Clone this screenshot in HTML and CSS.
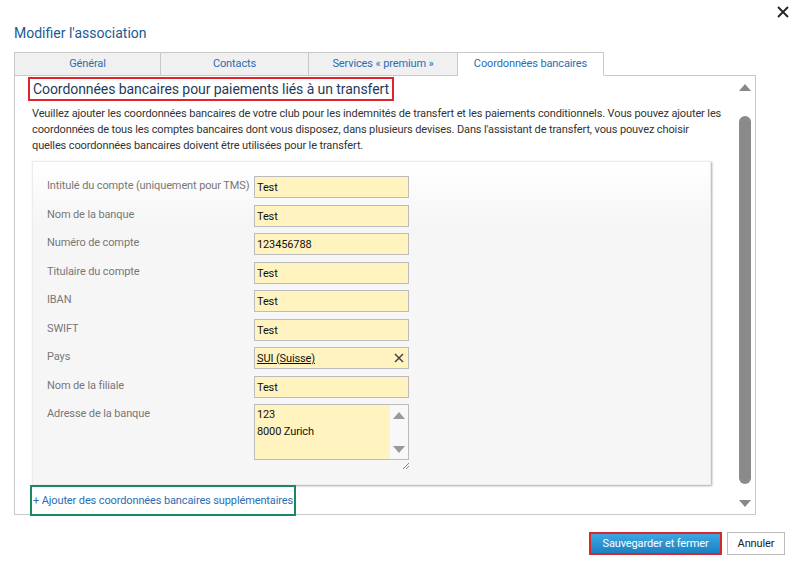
FILE: index.html
```html
<!DOCTYPE html>
<html lang="fr">
<head>
<meta charset="UTF-8">
<title>Modifier l'association</title>
<link rel="stylesheet" href="styles.css">
</head>
<body>
  <div class="dialog">
    <div class="header">
      <div class="title">Modifier l'association</div>
      <div class="close">
        <svg width="12" height="12" viewBox="0 0 12 12"><path d="M1 1L11 11M11 1L1 11" stroke="#222" stroke-width="1.8"/></svg>
      </div>
    </div>

    <div class="tabs">
      <div class="tab t1">Général</div>
      <div class="tab t2">Contacts</div>
      <div class="tab t3">Services « premium »</div>
      <div class="tab t4 active">Coordonnées bancaires</div>
    </div>

    <div class="panel">
      <div class="panel-body">
        <div class="heading">Coordonnées bancaires pour paiements liés à un transfert</div>
        <p class="intro">Veuillez ajouter les coordonnées bancaires de votre club pour les indemnités de transfert et les paiements conditionnels. Vous pouvez ajouter les coordonnées de tous les comptes bancaires dont vous disposez, dans plusieurs devises. Dans l'assistant de transfert, vous pouvez choisir quelles coordonnées bancaires doivent être utilisées pour le transfert.</p>

        <div class="card">
          <div class="row"><div class="label">Intitulé du compte (uniquement pour TMS)</div><div class="field">Test</div></div>
          <div class="row"><div class="label">Nom de la banque</div><div class="field">Test</div></div>
          <div class="row"><div class="label">Numéro de compte</div><div class="field">123456788</div></div>
          <div class="row"><div class="label">Titulaire du compte</div><div class="field">Test</div></div>
          <div class="row"><div class="label">IBAN</div><div class="field">Test</div></div>
          <div class="row"><div class="label">SWIFT</div><div class="field">Test</div></div>
          <div class="row"><div class="label">Pays</div>
            <div class="field select"><span class="country">SUI (Suisse)</span>
              <svg width="10" height="10" viewBox="0 0 10 10"><path d="M1 1L9 9M9 1L1 9" stroke="#444" stroke-width="1.5"/></svg>
            </div>
          </div>
          <div class="row"><div class="label">Nom de la filiale</div><div class="field">Test</div></div>
          <div class="row"><div class="label">Adresse de la banque</div>
            <div class="area-wrap">
              <div class="field area">
                <div class="area-text">123<br>8000 Zurich</div>
                <div class="area-scroll">
                  <svg width="12" height="8" viewBox="0 0 12 8"><path d="M0 8L6 1L12 8Z" fill="#999"/></svg>
                  <svg width="12" height="8" viewBox="0 0 12 8"><path d="M0 0L6 7L12 0Z" fill="#999"/></svg>
                </div>
              </div>
              <svg class="grip" width="6" height="6" viewBox="0 0 6 6"><path d="M6 0L0 6M6 3L3 6" stroke="#888" stroke-width="1"/></svg>
            </div>
          </div>
        </div>

        <div class="add-link">+ Ajouter des coordonnées bancaires supplémentaires</div>
      </div>

      <div class="scrollbar">
        <svg width="12" height="8" viewBox="0 0 12 8"><path d="M0 8L6 1L12 8Z" fill="#888"/></svg>
        <div class="thumb"></div>
        <svg width="12" height="8" viewBox="0 0 12 8"><path d="M0 0L6 7L12 0Z" fill="#888"/></svg>
      </div>
    </div>

    <div class="footer">
      <button class="btn primary">Sauvegarder et fermer</button>
      <button class="btn cancel">Annuler</button>
    </div>
  </div>
</body>
</html>
```

FILE: styles.css
```css
body {
  margin: 0;
  background: #fff;
  font-family: Roboto, "Liberation Sans", sans-serif;
  font-size: 11px;
  letter-spacing: -0.12px;
  color: #333;
}

.dialog {
  width: 798px;
  height: 571px;
  padding: 0 14px;
  box-sizing: border-box;
}

.header {
  display: flex;
  justify-content: space-between;
  align-items: flex-start;
  height: 52px;
}

.title {
  margin-top: 24px;
  font-size: 14px;
  letter-spacing: 0;
  line-height: 18px;
  color: #1c5a92;
}

.close {
  margin-top: 6px;
  margin-right: -7px;
  width: 14px;
  height: 14px;
}

.tabs {
  display: flex;
  height: 24px;
  position: relative;
  z-index: 1;
  margin-bottom: -1px;
}

.tab {
  height: 24px;
  box-sizing: border-box;
  border: 1px solid #c9c9c9;
  border-left-width: 0;
  background: #f0f0f0;
  color: #2a6db5;
  text-align: center;
  line-height: 22px;
  white-space: nowrap;
}

.t1 { width: 147px; border-left-width: 1px; }
.t2 { width: 148px; }
.t3 { width: 149px; }
.t4 { width: 146px; }

.tab.active {
  background: #fff;
  border-bottom-color: #fff;
}

.panel {
  display: flex;
  width: 742px;
  height: 440px;
  box-sizing: border-box;
  border: 1px solid #c9c9c9;
}

.panel-body {
  flex: 1;
  padding: 1px 0 0 13px;
}

.heading {
  display: inline-block;
  height: 24px;
  box-sizing: border-box;
  border: 2px solid #e0242b;
  padding: 0 3px;
  font-size: 14px;
  letter-spacing: -0.07px;
  line-height: 20px;
  color: #1e3b5e;
}

.intro {
  margin: 5px 0 0 4px;
  width: 690px;
  line-height: 16px;
  color: #333;
}

.card {
  margin: 7px 0 0 4px;
  width: 679px;
  height: 324px;
  box-sizing: border-box;
  padding: 14px 0 0 14px;
  background: linear-gradient(#fff, #f6f6f6 60px);
  border: 1px solid #ececec;
  box-shadow: 1px 1px 2px rgba(0, 0, 0, 0.35);
  display: flex;
  flex-direction: column;
  gap: 6.5px;
}

.row {
  display: flex;
}

.label {
  width: 207px;
  padding-top: 1px;
  color: #777;
  line-height: 18px;
  white-space: nowrap;
}

.field {
  width: 155px;
  height: 22px;
  box-sizing: border-box;
  border: 1px solid #bcbcbc;
  background: #fff3bf;
  color: #111;
  padding: 0 2px;
  line-height: 21px;
}

.select {
  display: flex;
  justify-content: space-between;
  align-items: center;
  padding-right: 4px;
}

.country {
  text-decoration: underline;
}

.area-wrap {
  position: relative;
}

.area {
  height: 56px;
  display: flex;
  padding: 0;
}

.area-text {
  flex: 1;
  padding: 1px 2px;
  line-height: 17px;
}

.area-scroll {
  width: 18px;
  background: #f8f8f8;
  display: flex;
  flex-direction: column;
  justify-content: space-between;
  align-items: center;
  padding: 6px 0 5px;
}

.grip {
  position: absolute;
  right: 0;
  bottom: -9px;
}

.add-link {
  display: inline-block;
  margin-left: 2px;
  height: 31px;
  box-sizing: border-box;
  border: 2px solid #1a8a5c;
  padding: 0 1px;
  line-height: 27px;
  color: #2a6db5;
  position: relative;
}

.scrollbar {
  width: 18px;
  margin-right: 1px;
  display: flex;
  flex-direction: column;
  align-items: center;
  padding: 7px 0 6px;
  box-sizing: border-box;
}

.thumb {
  width: 12px;
  flex: 1;
  margin: 25px 0 16px;
  background: #8a8a8a;
  border-radius: 6px;
}

.footer {
  display: flex;
  justify-content: flex-end;
  gap: 5px;
  margin-top: 17px;
  margin-right: -1px;
}

.btn {
  height: 23px;
  font-family: Roboto, "Liberation Sans", sans-serif;
  font-size: 11px;
  letter-spacing: -0.12px;
  padding: 0;
  background: #fff;
  border: 1px solid #bbb;
  color: #222;
  white-space: nowrap;
}

.btn.cancel {
  width: 58px;
}

.btn.primary {
  width: 133px;
  border: 2px solid #d8262d;
  background: linear-gradient(#3ea6e0, #1a82c4);
  color: #fff;
}
```
